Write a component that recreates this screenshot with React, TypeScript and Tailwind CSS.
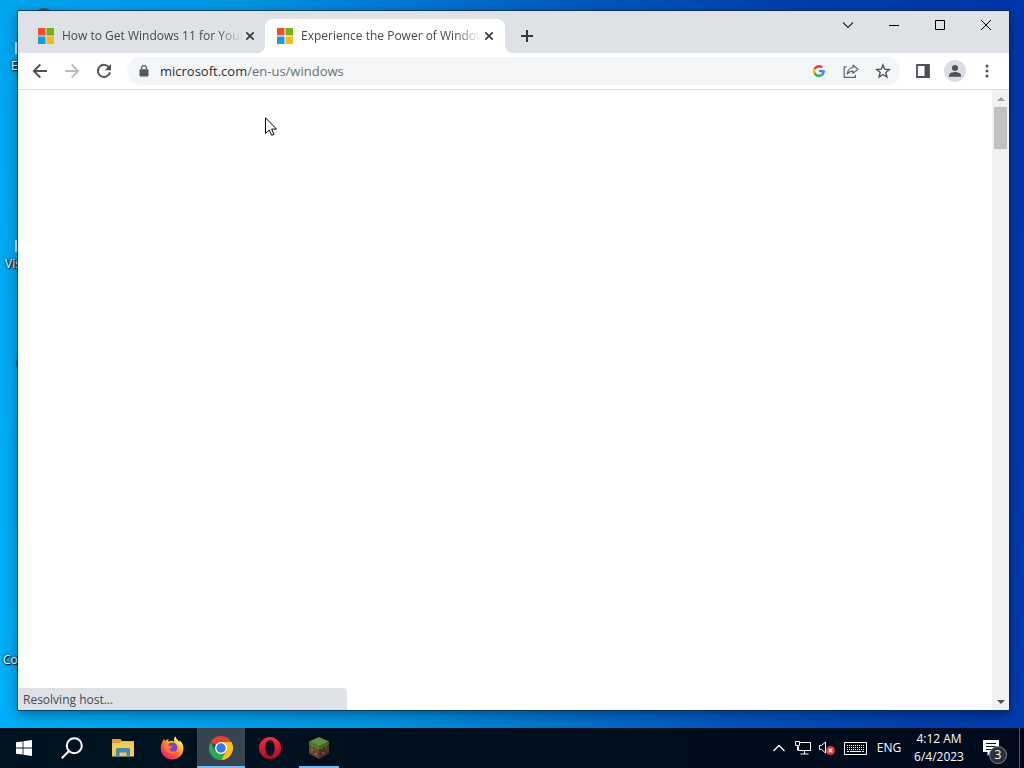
import React, { useState } from 'react';

const tabs = [
  { id: 'how-to', title: 'How to Get Windows 11 for Your' },
  { id: 'experience', title: 'Experience the Power of Window' },
];

function MicrosoftLogo() {
  return (
    <svg viewBox="0 0 16 16" className="h-4 w-4 shrink-0" aria-hidden="true">
      <path fill="#ee5027" d="M0 0h7.5v7.5H0z" />
      <path fill="#78b013" d="M8.5 0H16v7.5H8.5z" />
      <path fill="#1a9be6" d="M0 8.5h7.5V16H0z" />
      <path fill="#f8bb10" d="M8.5 8.5H16V16H8.5z" />
    </svg>
  );
}

function TabStrip() {
  const [active, setActive] = useState('experience');

  return (
    <div className="flex h-[42px] items-end bg-[#dee1e6] pl-2">
      {tabs.map((tab) => {
        const isActive = tab.id === active;
        return (
          <div
            key={tab.id}
            className={`relative -mr-px flex h-[34px] w-60 shrink-0 items-center rounded-t-lg pr-2 pl-3 ${
              isActive ? 'bg-white' : ''
            }`}
          >
            {isActive && (
              <>
                <span className="absolute bottom-0 -left-2 h-2 w-2 bg-[radial-gradient(circle_at_0_0,transparent_8px,#fff_8px)]" />
                <span className="absolute -right-2 bottom-0 h-2 w-2 bg-[radial-gradient(circle_at_100%_0,transparent_8px,#fff_8px)]" />
              </>
            )}
            <MicrosoftLogo />
            <button
              onClick={() => setActive(tab.id)}
              className="ml-2 min-w-0 flex-1 overflow-hidden mask-[linear-gradient(to_right,#000_86%,transparent)] text-left text-xs whitespace-nowrap text-[#45494d]"
            >
              {tab.title}
            </button>
            <button aria-label="Close tab" className="flex h-4 w-4 items-center justify-center">
              <svg viewBox="0 0 8 8" className="h-2 w-2" stroke="#33363a" strokeWidth="1.6">
                <path d="M0.3 0.3l7.4 7.4M7.7 0.3L0.3 7.7" />
              </svg>
            </button>
          </div>
        );
      })}
      <button aria-label="New tab" className="ml-[9px] flex h-[34px] w-7 items-center justify-center">
        <svg viewBox="0 0 12 12" className="h-3 w-3" stroke="#33363a" strokeWidth="2">
          <path d="M6 0v12M0 6h12" />
        </svg>
      </button>
      <div className="ml-auto flex self-start">
        <button aria-label="Search tabs" className="flex h-7 w-[46px] items-center justify-center">
          <svg viewBox="0 0 12 12" className="h-3 w-3" fill="none" stroke="#222" strokeWidth="1.1">
            <path d="M1 3.5l5 5 5-5" />
          </svg>
        </button>
        <button aria-label="Minimize" className="flex h-7 w-[46px] items-center justify-center">
          <svg viewBox="0 0 10 10" className="h-2.5 w-2.5" fill="none" stroke="#000">
            <path d="M0 5.5h10" />
          </svg>
        </button>
        <button aria-label="Maximize" className="flex h-7 w-[46px] items-center justify-center">
          <svg viewBox="0 0 10 10" className="h-2.5 w-2.5" fill="none" stroke="#000">
            <path d="M0.5 0.5h9v9h-9z" />
          </svg>
        </button>
        <button aria-label="Close" className="flex h-7 w-[46px] items-center justify-center">
          <svg viewBox="0 0 10 10" className="h-2.5 w-2.5" fill="none" stroke="#000">
            <path d="M0 0l10 10M10 0L0 10" />
          </svg>
        </button>
      </div>
    </div>
  );
}

interface IconButtonProps {
  label: string;
  children: React.ReactNode;
}

function IconButton({ label, children }: IconButtonProps) {
  return (
    <button aria-label={label} className="flex h-7 w-8 shrink-0 items-center justify-center">
      {children}
    </button>
  );
}

function Toolbar() {
  return (
    <div className="flex h-[37px] items-center border-b border-[#dadce0] bg-white px-[6px]">
      <IconButton label="Back">
        <svg viewBox="0 0 16 16" className="h-4 w-4" fill="none" stroke="#4d5155" strokeWidth="1.8">
          <path d="M15 8H2M8.3 1.5L1.8 8l6.5 6.5" />
        </svg>
      </IconButton>
      <IconButton label="Forward">
        <svg viewBox="0 0 16 16" className="h-4 w-4" fill="none" stroke="#babcbe" strokeWidth="1.8">
          <path d="M1 8h13M7.7 1.5L14.2 8l-6.5 6.5" />
        </svg>
      </IconButton>
      <IconButton label="Reload">
        <svg viewBox="0 0 16 16" className="h-4 w-4" fill="none" stroke="#4d5155" strokeWidth="1.9">
          <path d="M13.3 4.8A6.1 6.1 0 1 0 14 9.2" />
          <path fill="#4d5155" stroke="none" d="M15 1v6.2H8.8z" />
        </svg>
      </IconButton>

      <div className="mx-[7px] flex h-7 min-w-0 flex-1 items-center rounded-full bg-[#f3f5f6] pr-px">
        <button aria-label="View site information" className="flex h-7 w-[33px] items-center justify-center">
          <svg viewBox="0 0 10 12" className="h-3 w-2.5">
            <rect x="0.5" y="4.2" width="9" height="7.3" rx="1" fill="#55595d" />
            <path d="M2.7 4.5V3a2.3 2.3 0 0 1 4.6 0v1.5" fill="none" stroke="#55595d" strokeWidth="1.2" />
          </svg>
        </button>
        <a href="#windows" className="flex-1 truncate pt-0.5 text-[13px] text-[#6b6f73]">
          <span className="text-[#2c2f32]">microsoft.com</span>/en-us/windows
        </a>
        <IconButton label="Search with Google">
          <svg viewBox="0 0 48 48" className="h-3 w-3">
            <path fill="#EA4335" d="M24 9.5c3.54 0 6.71 1.22 9.21 3.6l6.85-6.85C35.9 2.38 30.47 0 24 0 14.62 0 6.51 5.38 2.56 13.22l7.98 6.19C12.43 13.72 17.74 9.5 24 9.5z" />
            <path fill="#4285F4" d="M46.98 24.55c0-1.57-.15-3.09-.38-4.55H24v9.02h12.94c-.58 2.96-2.26 5.48-4.78 7.18l7.73 6c4.51-4.18 7.09-10.36 7.09-17.65z" />
            <path fill="#FBBC05" d="M10.53 28.59c-.48-1.45-.76-2.99-.76-4.59s.27-3.14.76-4.59l-7.98-6.19C.92 16.46 0 20.12 0 24c0 3.88.92 7.54 2.56 10.78l7.97-6.19z" />
            <path fill="#34A853" d="M24 48c6.48 0 11.93-2.13 15.89-5.81l-7.73-6c-2.15 1.45-4.92 2.3-8.16 2.3-6.26 0-11.57-4.22-13.47-9.91l-7.98 6.19C6.51 42.62 14.62 48 24 48z" />
          </svg>
        </IconButton>
        <IconButton label="Share this page">
          <svg viewBox="0 0 16 16" className="h-4 w-4" fill="none" stroke="#5f6368" strokeWidth="1.2">
            <path d="M3.6 3.8H1.2v10.5h11.2V11.8" />
            <path strokeLinejoin="round" d="M10 2.2l5 4.1-5 4.1V8.1c-2.400 0-4.400.800-5.800 2.800.4-3.300 2.300-5.900 5.800-6.400z" />
          </svg>
        </IconButton>
        <IconButton label="Bookmark this tab">
          <svg viewBox="0 0 16 16" className="h-4 w-4" fill="none" stroke="#4d5155" strokeWidth="1.4">
            <path d="M8 1.9l1.7 4.3 4.6.3-3.5 3 1.1 4.5L8 11.5 4.1 14l1.1-4.5-3.5-3 4.6-.3z" />
          </svg>
        </IconButton>
      </div>

      <IconButton label="Side panel">
        <svg viewBox="0 0 14 14" className="h-3.5 w-3.5">
          <path d="M1 1h12v12H1z" fill="none" stroke="#4d5155" strokeWidth="1.8" />
          <path d="M8.5 1H13v12H8.5z" fill="#4d5155" />
        </svg>
      </IconButton>
      <IconButton label="Profile">
        <svg viewBox="0 0 22 22" className="h-[22px] w-[22px]">
          <circle cx="11" cy="11" r="11" fill="#dadde3" />
          <circle cx="11" cy="7.9" r="3" fill="#4d5155" />
          <path d="M5 16.8v-1.6c0-2 4-3.2 6-3.2s6 1.2 6 3.2v1.6z" fill="#4d5155" />
        </svg>
      </IconButton>
      <IconButton label="Menu">
        <svg viewBox="0 0 4 14" className="h-3.5 w-1" fill="#4d5155">
          <circle cx="2" cy="2" r="1.5" />
          <circle cx="2" cy="7" r="1.5" />
          <circle cx="2" cy="12" r="1.5" />
        </svg>
      </IconButton>
    </div>
  );
}

function Viewport() {
  return (
    <div className="relative flex min-h-0 flex-1 bg-white">
      <div className="flex-1" />
      <div className="flex w-[17px] flex-col items-center justify-between bg-[#f1f1f1]">
        <div className="flex flex-col items-center">
          <button aria-label="Scroll up" className="flex h-[17px] w-[17px] items-center justify-center">
            <svg viewBox="0 0 8 4" className="h-1 w-2" fill="#a0a0a0">
              <path d="M4 0l4 4H0z" />
            </svg>
          </button>
          <div className="h-[42px] w-[13px] bg-[#c1c1c1]" />
        </div>
        <button aria-label="Scroll down" className="flex h-[17px] w-[17px] items-center justify-center">
          <svg viewBox="0 0 8 4" className="h-1 w-2" fill="#505050">
            <path d="M0 0h8L4 4z" />
          </svg>
        </button>
      </div>

      {/* Status bubble */}
      <div className="absolute bottom-0 left-0 flex h-[22px] w-[329px] items-center rounded-tr bg-[#dee1e6] pt-0.5 pl-[5px] text-xs text-[#45494d]">
        Resolving host...
      </div>

      {/* Mouse pointer */}
      <svg viewBox="0 0 12 19" className="absolute top-[27px] left-[247px] h-[19px] w-3">
        <path d="M0.5 0.8v15.7l3.7-3.5 2.5 5.3 2.3-1-2.4-5.2h4.9z" fill="#fff" stroke="#000" strokeWidth="1" />
      </svg>
    </div>
  );
}

function DesktopIcons() {
  return (
    <div className="text-xs text-white [text-shadow:1px_1px_1px_#000,0_0_3px_#000]">
      <span className="absolute top-[42px] left-[15px] h-3 w-1 bg-[#cfe3f0]" />
      <span className="absolute top-[58px] left-[11px]">Edge</span>
      <span className="absolute top-[240px] left-[15px] h-3 w-1 bg-[#cfe3f0]" />
      <span className="absolute top-[256px] left-[5px]">Visual</span>
      <span className="absolute top-[355px] left-4 h-4 w-4 rounded-full bg-[#1f5b83]" />
      <span className="absolute top-[652px] left-[3px]">Control</span>
      <span className="absolute top-2 left-8 h-6 w-6 rounded-full bg-[#3d5a5c]" />
    </div>
  );
}

function Taskbar() {
  return (
    <footer className="flex h-10 shrink-0 bg-linear-to-r from-[#00131f] to-[#000a1c] text-white">
      <button aria-label="Start" className="flex w-12 items-center justify-center">
        <svg viewBox="0 0 16 16" className="h-4 w-4" fill="#fff">
          <path d="M0 2.3l6.6-.9v6.2H0zM7.4 1.3L16 0v7.6H7.4zM0 8.4h6.6v6.2L0 13.7zM7.4 8.4H16V16l-8.6-1.2z" />
        </svg>
      </button>
      <button aria-label="Search" className="flex w-12 items-center justify-center">
        <svg viewBox="0 0 22 22" className="h-[22px] w-[22px]" fill="none" stroke="#fff" strokeWidth="2">
          <circle cx="13.3" cy="8.7" r="7.5" />
          <path d="M8 14L0.8 21.2" />
        </svg>
      </button>

      <div className="ml-[3px] flex gap-px">
        <button aria-label="File Explorer" className="flex w-12 items-center justify-center">
          <svg viewBox="0 0 22 18" className="h-[18px] w-[22px]">
            <path fill="#d9a036" d="M0 0h8.5l1.5 2H22v4H0z" />
            <path fill="#f3c95c" d="M0 4h8l1.5-1.5H22V17.5H0z" />
            <path fill="#4688ae" d="M4 10.5q0-1.5 1.5-1.5h11q1.500 0 1.500 1.500V18h-3.500v-4.500h-7V18H4z" />
          </svg>
        </button>
        <button aria-label="Firefox" className="flex w-12 items-center justify-center">
          <svg viewBox="0 0 24 24" className="h-6 w-6">
            <defs>
              <linearGradient id="ff" x1="0.85" y1="0.1" x2="0.2" y2="0.95">
                <stop offset="0.1" stopColor="#fff14a" />
                <stop offset="0.4" stopColor="#ffa030" />
                <stop offset="0.7" stopColor="#ff4a3c" />
                <stop offset="1" stopColor="#e61c80" />
              </linearGradient>
            </defs>
            <path fill="url(#ff)" d="M2.6 5.2C3 4.300 3.700 3.200 4.200 2.800c0 1 .2 1.600.7 2.300C5.900 4 7.500 3 9 3c-.6.800-1 1.700-1 2.400 2-.8 4.500-1 6.500.3-1-1.800-.6-3.900 1-5.500.3 2.500 2.200 3.800 4 5.600.2-.6.200-1.200.1-1.800 2.800 2.700 4.200 6.200 3.800 9.700C22.800 19.400 18 23.500 12.200 23.500 5.800 23.500.8 18.800.8 12.500c0-2.800.6-5.100 1.800-7.300z" />
            <circle cx="12.5" cy="11.500" r="5" fill="#7542c8" />
            <path fill="#ff7a35" d="M4.500 8.500c2-.5 4 .2 5.200 1.500 1 .2 2 .2 3 .5-.2 1.300-2.700 1.500-3 2.800.4 2.400 3.500 2.800 5.500 1.800-1.200 3-6.500 3.500-9 .2C4.600 13.300 4.200 10.700 4.500 8.500z" />
          </svg>
        </button>
        <button
          aria-label="Google Chrome"
          className="flex w-12 items-center justify-center border-b-2 border-[#76b9ed] bg-[#35444f] pt-0.5"
        >
          <svg viewBox="0 0 24 24" className="h-6 w-6">
            <path fill="#e0432f" d="M12 12L1.6 6A12 12 0 0 1 22.4 6z" />
            <path fill="#fbc116" d="M12 6h10.4A12 12 0 0 1 12 24l5.2-9z" />
            <path fill="#2da94f" d="M1.6 6A12 12 0 0 0 12 24l5.2-9L12 12 6.8 15z" />
            <circle cx="12" cy="12" r="6" fill="#fff" />
            <circle cx="12" cy="12" r="4.7" fill="#3b78e7" />
          </svg>
        </button>
        <button aria-label="Opera" className="flex w-12 items-center justify-center">
          <svg viewBox="0 0 24 24" className="h-6 w-6">
            <defs>
              <linearGradient id="op" x1="0" y1="0" x2="0" y2="1">
                <stop offset="0" stopColor="#f52c42" />
                <stop offset="1" stopColor="#b40a22" />
              </linearGradient>
            </defs>
            <path
              fill="url(#op)"
              fillRule="evenodd"
              d="M12 1a11 11 0 1 0 0 22 11 11 0 1 0 0-22zM12 4c2.8 0 4.7 3.6 4.7 8S14.8 20 12 20s-4.7-3.600-4.700-8S9.200 4 12 4z"
            />
          </svg>
        </button>
        <button aria-label="Minecraft" className="flex w-12 flex-col items-center justify-end">
          <svg viewBox="0 0 22 24" className="mb-[6px] h-6 w-[22px]">
            <path fill="#5f9040" d="M11 1l10 4.600L11 10.500 1 5.600z" />
            <path fill="#6b4030" d="M1 5.600l10 4.900V23L1 17.500z" />
            <path fill="#4b2f22" d="M21 5.600l-10 4.900V23l10-5.500z" />
            <path fill="#4c7a2c" d="M1 5.600l10 4.900v3l-2-1v1.500l-2-1v-1.500l-2-1v2l-2-1V9.500L1 8.500z" />
            <path fill="#3f6a26" d="M21 5.600l-10 4.900v3l2-1v1.500l2-1v-2l2-1V12l2-1V9.500l2-1z" />
            <path fill="#8b6a55" d="M3 13h2v2H3zM7 17h2v2H7z" />
            <path fill="#75503c" d="M14 16h2v2h-2zM18 12h1v2h-1z" />
          </svg>
          <span className="h-0.5 w-10 bg-[#76b9ed]" />
        </button>
      </div>

      <div className="ml-auto flex items-center text-xs">
        <button aria-label="Show hidden icons" className="flex h-10 w-6 items-center justify-center">
          <svg viewBox="0 0 12 8" className="h-2 w-3" fill="none" stroke="#fff" strokeWidth="1.3">
            <path d="M0.5 7L6 1.5 11.5 7" />
          </svg>
        </button>
        <button aria-label="Network" className="flex h-10 w-6 items-center justify-center">
          <svg viewBox="0 0 16 14" className="h-3.5 w-4" fill="none" stroke="#fff" strokeWidth="1">
            <path d="M5 1.5h10.500v8H3.500V5.500M0.500 0.500h4v4h-4zM2.500 4.500v5M9.500 9.500v3.500M5.500 13h8" />
          </svg>
        </button>
        <button aria-label="Volume muted" className="flex h-10 w-6 items-center justify-center">
          <svg viewBox="0 0 16 14" className="h-3.5 w-4" fill="none" stroke="#fff" strokeWidth="1">
            <path d="M0.5 4.500h2l4-3.500v11l-4-3.500h-2z" />
            <circle cx="11.500" cy="9.500" r="4.500" fill="#d23b3f" stroke="none" />
            <path d="M9.700 7.700l3.600 3.600M13.300 7.700l-3.600 3.600" strokeWidth="1.200" />
          </svg>
        </button>
        <button aria-label="Touch keyboard" className="flex h-10 w-8 items-center justify-center">
          <svg viewBox="0 0 23 13" className="h-[13px] w-[23px]" fill="none" stroke="#fff" strokeWidth="1">
            <path d="M0.5 0.5h22v12h-22z" />
            <path strokeDasharray="1 1" d="M3 3.5h17M3 5.5h17M3 7.5h17" />
            <path d="M3 9.5h2M6 9.5h11M18 9.5h2" />
          </svg>
        </button>
        <button className="h-10 w-9">ENG</button>
        <button className="w-16 text-center leading-[18px]">
          4:12 AM
          <br />
          6/4/2023
        </button>
        <button aria-label="Notifications" className="relative flex h-10 w-12 items-center">
          <svg viewBox="0 0 16 16" className="ml-3 h-4 w-4">
            <path fill="#fff" d="M0 0h16v12H8l-3.5 4v-4H0z" />
            <path stroke="#00101c" d="M3 3.5h10M3 6.5h10M3 9.5h6" />
          </svg>
          <span className="absolute top-[18px] left-[18px] flex h-[18px] w-[18px] items-center justify-center rounded-full border border-[#80868c] bg-[#2a3037] text-xs">
            3
          </span>
        </button>
        <button aria-label="Show desktop" className="h-10 w-[5px] border-l border-[#4d5661]" />
      </div>
    </footer>
  );
}

export default function App() {
  return (
    <div className="flex h-screen flex-col overflow-hidden font-['Open_Sans',sans-serif]">
      <main className="relative flex min-h-0 flex-1 bg-[linear-gradient(80deg,#00aef8_0%,#0096e2_32%,#0074cd_48%,#0054bd_64%,#003fae_80%,#0036aa_100%)]">
        <DesktopIcons />
        <section className="relative mt-[11px] mr-[15px] mb-[18px] ml-[18px] flex min-w-0 flex-1 flex-col shadow-[0_0_0_1px_rgba(10,40,80,0.75),0_4px_12px_rgba(0,0,0,0.4)]">
          <TabStrip />
          <Toolbar />
          <Viewport />
        </section>
      </main>
      <Taskbar />
    </div>
  );
}
